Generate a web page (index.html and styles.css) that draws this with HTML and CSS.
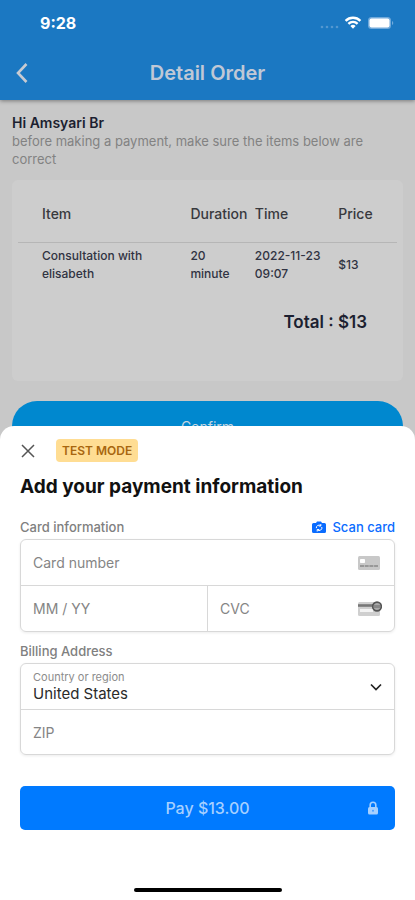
FILE: index.html
```html
<!DOCTYPE html>
<html lang="en">
<head>
<meta charset="utf-8">
<meta name="viewport" content="width=device-width, initial-scale=1">
<title>Detail Order</title>
<link rel="stylesheet" href="styles.css">
</head>
<body>
<header class="top">
  <div class="status">
    <span class="clock">9:28</span>
    <svg class="signals" viewBox="0 0 76 16" width="76" height="16" aria-hidden="true">
      <g fill="#5497d0"><circle cx="3" cy="12" r="1.3"/><circle cx="8" cy="12" r="1.3"/><circle cx="13" cy="12" r="1.3"/><circle cx="18" cy="12" r="1.3"/></g>
      <g fill="none" stroke="#fff" stroke-width="2.4"><path d="M26.600 5.800a10.500 10.500 0 0 1 14.800 0"/><path d="M29.400 8.800a6.500 6.500 0 0 1 9.200 0"/></g>
      <path d="M31.400 11a3.700 3.700 0 0 1 5.200 0L34 13.800z" fill="#fff"/>
      <rect x="49" y="2" width="23" height="12" rx="3.500" fill="#70a9da"/>
      <rect x="50.500" y="3.500" width="20" height="9" rx="2" fill="#fff"/>
      <path d="M73 6a2.200 2.200 0 0 1 0 4z" fill="#70a9da"/>
    </svg>
  </div>
  <nav class="bar">
    <button class="back" type="button" aria-label="Back">
      <svg viewBox="0 0 14 22" width="14" height="22"><path d="M12.500 2L4 11l8.500 9" fill="none" stroke="currentColor" stroke-width="2.600"/></svg>
    </button>
    <h1>Detail Order</h1>
  </nav>
</header>

<main class="order">
  <h2>Hi Amsyari Br</h2>
  <p class="note">before making a payment, make sure the items below are correct</p>
  <section class="card">
    <table>
      <colgroup><col class="c-item"><col class="c-duration"><col class="c-time"><col></colgroup>
      <thead><tr><th>Item</th><th>Duration</th><th>Time</th><th>Price</th></tr></thead>
      <tbody><tr><td>Consultation with elisabeth</td><td>20 minute</td><td>2022-11-23 09:07</td><td>$13</td></tr></tbody>
    </table>
    <p class="total">Total : $13</p>
  </section>
  <button class="confirm" type="button">Confirm</button>
</main>

<form class="sheet">
  <div class="sheet-head">
    <button class="close" type="button" aria-label="Close">
      <svg viewBox="0 0 14 14" width="14" height="14"><path d="M1 1l12 12M13 1L1 13" fill="none" stroke="currentColor" stroke-width="1.500"/></svg>
    </button>
    <span class="badge">TEST MODE</span>
  </div>
  <h2 class="sheet-title">Add your payment information</h2>

  <div class="group-head">
    <span id="card-label">Card information</span>
    <button class="scan" type="button">
      <svg viewBox="0 0 14 12" width="14" height="12"><path d="M1.500 2H4L5 .5h4L10 2h2.500A1.500 1.500 0 0 1 14 3.500v7a1.500 1.500 0 0 1-1.500 1.500h-11A1.500 1.500 0 0 1 0 10.500v-7A1.500 1.500 0 0 1 1.500 2z" fill="currentColor"/><path d="M4.300 7.200a2.800 2.800 0 0 1 4.500-2.500M9.800 6a2.800 2.800 0 0 1-4.500 2.900M8.800 3v2h-2M5.200 10.500v-2h2" fill="none" stroke="#fff" stroke-width="1"/></svg>
      Scan card
    </button>
  </div>
  <div class="fields" role="group" aria-labelledby="card-label">
    <div class="field">
      <input type="text" placeholder="Card number" aria-label="Card number">
      <svg viewBox="0 0 24 16" width="24" height="16" aria-hidden="true"><rect x="0" y="1" width="22" height="14" rx="1.500" fill="#c8c8c8"/><rect x="2" y="4" width="5" height="4" rx=".8" fill="#fff"/><path d="M2 11h18" stroke="#888" stroke-width="1.300" stroke-dasharray="4 .7"/></svg>
    </div>
    <div class="pair">
      <div class="field"><input type="text" placeholder="MM / YY" aria-label="Expiry date"></div>
      <div class="field">
        <input type="text" placeholder="CVC" aria-label="CVC">
        <svg viewBox="0 0 24 16" width="24" height="16" aria-hidden="true"><rect x="0" y="1" width="22" height="14" rx="1.500" fill="#cfcfcf"/><path d="M0 4.500h16" stroke="#777" stroke-width="2.600"/><rect x="2" y="8" width="13" height="3" fill="#f3f3f3"/><circle cx="19" cy="5.500" r="4.300" fill="#aaa" stroke="#555" stroke-width="1.700"/><path d="M17 4v3M19 4v3M21 4v3" stroke="#666" stroke-width="1"/></svg>
      </div>
    </div>
  </div>

  <div class="group-head"><span id="billing-label">Billing Address</span></div>
  <div class="fields" role="group" aria-labelledby="billing-label">
    <div class="field">
      <div class="stack">
        <label for="country">Country or region</label>
        <select id="country"><option>United States</option></select>
      </div>
      <svg class="chevron" viewBox="0 0 12 8" width="12" height="8" aria-hidden="true"><path d="M1 1.500l5 5 5-5" fill="none" stroke="#222" stroke-width="1.700"/></svg>
    </div>
    <div class="field"><input type="text" placeholder="ZIP" aria-label="ZIP"></div>
  </div>

  <button class="pay" type="submit">
    <span>Pay $13.00</span>
    <svg viewBox="0 0 12 14" width="12" height="14" aria-hidden="true"><rect x="1" y="6" width="10" height="7.500" rx="1.500" fill="currentColor"/><path d="M3.200 6.500V4a2.800 2.800 0 0 1 5.600 0v2.500" fill="none" stroke="currentColor" stroke-width="1.600"/><circle cx="6" cy="9.700" r="1" fill="#4a9fff"/></svg>
  </button>
  <div class="home"></div>
</form>
</body>
</html>
```
FILE: styles.css
```css
* { box-sizing: border-box; }
body {
  margin: 0;
  min-height: 100vh;
  background: #c8c8c8;
  color: #1c1f30;
  font-family: Inter, "Liberation Sans", sans-serif;
}
h1, h2, p { margin: 0; }
button, input, select { font: inherit; }
button { border: 0; padding: 0; background: none; cursor: pointer; }
svg { display: block; flex: none; }

.top { background: #1b78c2; box-shadow: 0 1px 4px rgba(0, 0, 0, .4); }
.status {
  display: flex;
  justify-content: space-between;
  align-items: center;
  height: 46px;
  padding: 0 20px 0 40px;
}
.clock { color: #fff; font-size: 16px; font-weight: 700; }
.bar {
  display: grid;
  grid-template-columns: 32px 1fr 32px;
  align-items: center;
  height: 54px;
  padding: 0 14px;
}
.back { color: #c8cbd2; }
.bar h1 { color: #c0c8d6; font-size: 20px; font-weight: 600; text-align: center; }

.order { padding: 14px 12px; }
.order h2 { font-size: 14px; line-height: 18px; font-weight: 600; }
.note { font-size: 13px; line-height: 18px; color: #828282; }
.card {
  margin: 12px 0 20px;
  padding: 6px 6px 47px;
  border-radius: 6px;
  background: #cdcdcd;
}
table { width: 100%; table-layout: fixed; border-collapse: collapse; text-align: left; }
.c-item { width: 45.5%; }
.c-duration { width: 17%; }
.c-time { width: 22%; }
th { height: 56px; padding: 0; border-bottom: 1px solid #b6b6b6; font-size: 14px; font-weight: 500; color: #38393e; }
td { height: 46px; padding: 0; font-size: 12px; line-height: 18px; font-weight: 500; color: #303342; }
th:first-child, td:first-child { padding-left: 24px; }
td:first-child { padding-right: 40px; }
td:nth-child(2), td:nth-child(3) { padding-right: 12px; }
.total { margin-top: 22px; padding-right: 30px; text-align: right; font-size: 17px; line-height: 24px; font-weight: 600; }
.confirm {
  width: 100%;
  height: 50px;
  border-radius: 25px;
  background: #0088cf;
  color: #c8d6e0;
  font-size: 14px;
}

.sheet {
  position: absolute;
  inset: auto 0 0;
  padding: 13px 20px 8px;
  border-radius: 14px 14px 0 0;
  background: #fff;
}
.sheet-head { display: flex; align-items: center; gap: 20px; }
.close { padding: 1px; color: #555; }
.badge {
  padding: 0 6px;
  border-radius: 4px;
  background: #ffdd93;
  color: #a8660f;
  font-size: 12px;
  line-height: 23px;
  font-weight: 600;
}
.sheet-title { margin: 12px 0 17px; color: #111; font-size: 19px; line-height: 26px; font-weight: 700; }
.group-head {
  display: flex;
  justify-content: space-between;
  align-items: center;
  height: 20px;
  margin-bottom: 2px;
  color: #808080;
  font-size: 13px;
  font-weight: 500;
}
.scan { display: flex; align-items: center; gap: 6px; color: #0a6cff; }
.fields {
  margin-bottom: 9px;
  border: 1px solid #d8d8d8;
  border-radius: 6px;
  box-shadow: 0 1px 3px rgba(0, 0, 0, .08);
}
.field { display: flex; align-items: center; flex: 1; height: 45px; min-width: 0; padding: 0 12px; }
.fields > * + *, .pair .field + .field { border: 0 solid #d8d8d8; }
.fields > * + * { border-top-width: 1px; }
.pair { display: flex; }
.pair .field + .field { border-left-width: 1px; }
input, select { width: 100%; min-width: 0; padding: 0; border: 0; outline: 0; background: none; color: #2a2a2a; font-size: 14px; }
input::placeholder { color: #858585; opacity: 1; }
.stack { flex: 1; display: flex; flex-direction: column; }
.stack label { color: #8c8c8c; font-size: 11px; line-height: 14px; }
select { appearance: none; font-size: 15px; line-height: 19px; }
.pay {
  display: grid;
  grid-template-columns: 12px 1fr 12px;
  align-items: center;
  width: 100%;
  height: 44px;
  margin: 31px 0 58px;
  padding: 0 16px;
  border-radius: 5px;
  background: #007aff;
  color: #a6d0ff;
  font-size: 16px;
  font-weight: 500;
}
.pay span { grid-column: 2; }
.home { width: 148px; height: 4px; margin: 0 auto; border-radius: 2px; background: #000; }
```
